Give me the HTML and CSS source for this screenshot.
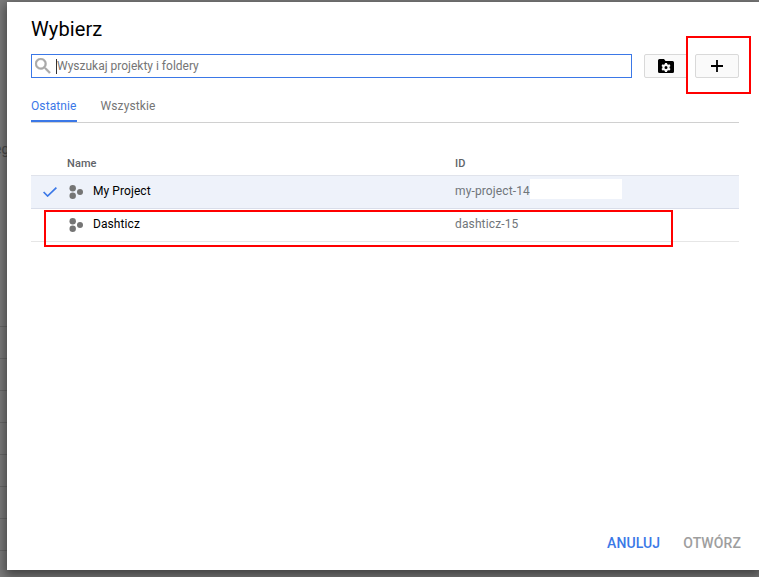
FILE: index.html
```html
<!DOCTYPE html>
<html lang="pl">
<head>
<meta charset="utf-8">
<title>Wybierz</title>
<link rel="stylesheet" href="styles.css">
</head>
<body>
<div class="backdrop">
  <span class="bg-text">eg</span>
  <div class="bg-rows">
    <i></i><i></i><i></i><i></i><i></i><i></i><i></i><i></i>
  </div>
</div>
<div class="dialog">
  <h1 class="title">Wybierz</h1>
  <div class="toolbar">
    <div class="search">
      <svg class="search-icon" viewBox="3 3 18 18" width="16" height="16"><path fill="#a8a8a8" stroke="#a8a8a8" stroke-width=".5" d="M15.500 14h-.79l-.28-.27A6.470 6.470 0 0 0 16 9.500 6.500 6.500 0 1 0 9.500 16c1.610 0 3.090-.59 4.230-1.570l.27.280v.79l5 4.990L20.490 19l-4.990-5zm-6 0C7.010 14 5 11.990 5 9.500S7.010 5 9.500 5 14 7.010 14 9.500 11.990 14 9.500 14z"/></svg>
      <span class="caret"></span>
      <span class="placeholder">Wyszukaj projekty i foldery</span>
    </div>
    <button class="tool-btn folder-btn">
      <svg viewBox="0 0 16 14" width="16" height="14"><path fill="#000" fill-rule="evenodd" d="M1.500 0H6l1.500 2h7A1.500 1.500 0 0 1 16 3.500v9a1.500 1.500 0 0 1-1.500 1.500h-13A1.500 1.500 0 0 1 0 12.500v-11A1.500 1.500 0 0 1 1.500 0zM7 4l-.3 1.200-1 .5-1.200-.4-1 1.700.9.800v1.300l-.9.800 1 1.700 1.200-.4 1 .5.300 1.300h2l.3-1.300 1-.5 1.200.4 1-1.700-.9-.8V7.800l.9-.8-1-1.700-1.200.4-1-.5L9 4zm1 3a1.500 1.500 0 1 1 0 3 1.500 1.500 0 0 1 0-3z"/></svg>
    </button>
    <button class="tool-btn plus-btn">
      <svg viewBox="0 0 14 14" width="14" height="14"><path fill="#000" d="M6.100 1h1.800v5.100H13v1.800H7.900V13H6.100V7.900H1V6.100h5.100z"/></svg>
    </button>
  </div>
  <div class="tabs">
    <span class="tab active">Ostatnie</span>
    <span class="tab">Wszystkie</span>
  </div>
  <div class="table">
    <div class="row head">
      <span class="cell-check"></span>
      <span class="cell-name">Name</span>
      <span class="cell-id">ID</span>
    </div>
    <div class="row item selected">
      <span class="cell-check">
        <svg viewBox="0 0 14 10" width="14" height="10"><path fill="none" stroke="#3b78e7" stroke-width="1.700" d="M.6 5l4 4L13.400.6"/></svg>
      </span>
      <span class="cell-name">
        <svg class="hex" viewBox="0 0 14 14" width="14" height="14"><circle cx="3.700" cy="3.200" r="3.200" fill="#757575"/><circle cx="3.700" cy="10.800" r="3.200" fill="#757575"/><circle cx="11" cy="7" r="3" fill="#757575"/></svg>
        <span class="project">My Project</span>
      </span>
      <span class="cell-id">my-project-14<span class="redact"></span></span>
    </div>
    <div class="row item">
      <span class="cell-check"></span>
      <span class="cell-name">
        <svg class="hex" viewBox="0 0 14 14" width="14" height="14"><circle cx="3.700" cy="3.200" r="3.200" fill="#757575"/><circle cx="3.700" cy="10.800" r="3.200" fill="#757575"/><circle cx="11" cy="7" r="3" fill="#757575"/></svg>
        <span class="project">Dashticz</span>
      </span>
      <span class="cell-id">dashticz-15</span>
    </div>
  </div>
  <div class="actions">
    <span class="action primary">ANULUJ</span>
    <span class="action disabled">OTWÓRZ</span>
  </div>
</div>
<div class="mark mark-plus"></div>
<div class="mark mark-row"></div>
</body>
</html>
```
FILE: styles.css
```css
* { box-sizing: border-box; }
html, body { margin: 0; height: 100%; }
body {
  position: relative;
  width: 759px;
  height: 577px;
  overflow: hidden;
  background: #7a7a7a;
  font-family: Roboto, "Liberation Sans", sans-serif;
}
.backdrop { position: absolute; inset: 0; background: #7b7b7b; }
.bg-text { position: absolute; left: -6px; top: 141px; font-size: 14px; color: #4c4c4c; }
.bg-rows { position: absolute; left: 0; top: 326px; width: 7px; display: flex; flex-direction: column; }
.bg-rows i { display: block; height: 32px; border-top: 1px solid #696969; }
.dialog {
  position: absolute;
  left: 7px;
  top: 2px;
  width: 752px;
  height: 568px;
  background: #fff;
  padding: 0 20px 0 24px;
  display: flex;
  flex-direction: column;
  box-shadow: 0 4px 10px 2px rgba(0,0,0,.45);
}
.title { margin: 14px 0 0; font-size: 20px; line-height: 26px; font-weight: 400; color: #000; letter-spacing: .1px; }
.toolbar { display: flex; align-items: stretch; height: 24px; margin-top: 12px; }
.search {
  width: 601px;
  border: 1px solid #3b78e7;
  display: flex;
  align-items: center;
  padding-left: 3px;
}
.search-icon { flex: none; }
.caret { width: 1px; height: 15px; background: #333; margin-left: 5px; }
.placeholder { font-size: 12px; color: #757575; }
.tool-btn {
  height: 24px;
  padding: 0;
  background: #fafafa;
  border: 1px solid #d9d9d9;
  border-radius: 2px;
  display: flex;
  align-items: center;
  justify-content: center;
}
.folder-btn { width: 44px; margin-left: 12px; }
.plus-btn { width: 44px; margin-left: 7px; }
.tabs { display: flex; gap: 24px; height: 34px; margin-top: 11px; border-bottom: 1px solid #d0d0d0; }
.tab { font-size: 12px; line-height: 34px; height: 33px; color: #757575; letter-spacing: .1px; }
.tab.active { color: #3b78e7; border-bottom: 2px solid #3b78e7; }
.table { margin-top: 23px; display: flex; flex-direction: column; }
.row { display: flex; align-items: center; border-bottom: 1px solid #e6e6e6; }
.head { height: 30px; font-size: 11px; color: #5f6368; font-weight: 500; letter-spacing: .1px; padding-top: 6px; border-bottom-color: #e0e3eb; }
.item { height: 33px; font-size: 12px; color: #000; letter-spacing: .08px; }
.selected { background: #eef2fa; border-bottom-color: #d9deea; }
.cell-check { width: 36px; flex: none; display: flex; justify-content: center; padding-left: 2px; padding-bottom: 1px; }
.cell-name { width: 388px; flex: none; display: flex; align-items: center; }
.hex { margin: 0 10px 0 2px; flex: none; }
.project { margin-bottom: 3px; }
.cell-id { color: #70757a; display: flex; align-items: center; height: 100%; letter-spacing: .13px; padding-bottom: 2px; }
.head .cell-id { color: #5f6368; padding-bottom: 0; letter-spacing: .1px; }
.redact { width: 92px; height: 20px; background: #fff; margin-bottom: 4px; }
.actions { margin-top: auto; display: flex; justify-content: flex-end; gap: 23px; margin-right: -2px; padding-bottom: 19px; }
.action { font-size: 14px; font-weight: 500; letter-spacing: .1px; line-height: 16px; }
.primary { color: #3b78e7; }
.disabled { color: #9e9e9e; }
.mark { position: absolute; border: 2px solid #f00; }
.mark-plus { left: 686px; top: 36px; width: 65px; height: 58px; }
.mark-row { left: 44px; top: 210px; width: 629px; height: 37px; }
```
